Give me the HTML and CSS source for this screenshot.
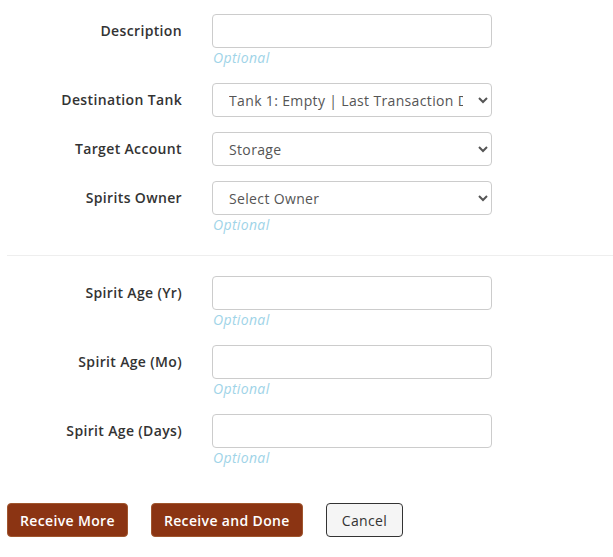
FILE: index.html
```html
<!DOCTYPE html>
<html lang="en">

<head>
    <title>Receive Spirits</title>
    <meta name="viewport" content="initial-scale=1, width=device-width">
    <link rel="stylesheet" href="styles.css">
</head>

<body>
    <form class="receive-form">
        <div class="form-group">
            <label for="description">Description</label>
            <div class="field">
                <input type="text" id="description">
                <span class="help">Optional</span>
            </div>
        </div>
        <div class="form-group">
            <label for="tank">Destination Tank</label>
            <div class="field">
                <select id="tank">
                    <option>Tank 1: Empty | Last Transaction Date: None</option>
                </select>
            </div>
        </div>
        <div class="form-group">
            <label for="account">Target Account</label>
            <div class="field">
                <select id="account">
                    <option>Storage</option>
                </select>
            </div>
        </div>
        <div class="form-group">
            <label for="owner">Spirits Owner</label>
            <div class="field">
                <select id="owner">
                    <option>Select Owner</option>
                </select>
                <span class="help">Optional</span>
            </div>
        </div>

        <hr>

        <div class="form-group">
            <label for="age-yr">Spirit Age (Yr)</label>
            <div class="field">
                <input type="text" id="age-yr">
                <span class="help">Optional</span>
            </div>
        </div>
        <div class="form-group">
            <label for="age-mo">Spirit Age (Mo)</label>
            <div class="field">
                <input type="text" id="age-mo">
                <span class="help">Optional</span>
            </div>
        </div>
        <div class="form-group">
            <label for="age-days">Spirit Age (Days)</label>
            <div class="field">
                <input type="text" id="age-days">
                <span class="help">Optional</span>
            </div>
        </div>

        <div class="actions">
            <button type="button" class="btn btn-primary">Receive More</button>
            <button type="button" class="btn btn-primary">Receive and Done</button>
            <button type="button" class="btn btn-default">Cancel</button>
        </div>
    </form>
</body>
</html>
```

FILE: styles.css
```css
* {
    box-sizing: border-box;
    font-family: "Open Sans", "Liberation Sans", sans-serif;
    letter-spacing: 0.35px;
}

html,
body {
    margin: 0;
    padding: 0;
    background-color: #fff;
    color: #333;
}

.receive-form {
    padding: 14px 0 0 7px;
}

.form-group {
    display: flex;
    align-items: flex-start;
    margin-bottom: 15px;
}

.form-group label {
    width: 175px;
    margin-right: 30px;
    padding-top: 7px;
    line-height: 20px;
    text-align: right;
    font-size: 14px;
    font-weight: 600;
    color: #333;
}

.field {
    display: flex;
    flex-direction: column;
    width: 280px;
}

input,
select {
    height: 34px;
    width: 280px;
    padding: 6px 12px;
    border: 1px solid #ccc;
    border-radius: 4px;
    background-color: #fff;
    font-size: 14px;
    color: #555;
}

.help {
    height: 20px;
    line-height: 20px;
    padding-left: 1px;
    font-size: 14px;
    font-style: italic;
    color: #9fd4e8;
}

hr {
    margin: 20px 0 20px 0;
    border: 0;
    border-top: 1px solid #eee;
}

.actions {
    display: flex;
    gap: 23px;
    margin-top: 35px;
}

.btn {
    height: 34px;
    padding: 6px 12px;
    border-radius: 4px;
    font-size: 14px;
    font-weight: 600;
}

.btn-primary {
    background-color: #8b3413;
    border: 1px solid #a0562e;
    color: #fff;
}

.btn-default {
    background-color: #f5f5f5;
    border: 1px solid #333;
    color: #333;
    font-weight: 400;
    padding: 6px 15px;
}
```
